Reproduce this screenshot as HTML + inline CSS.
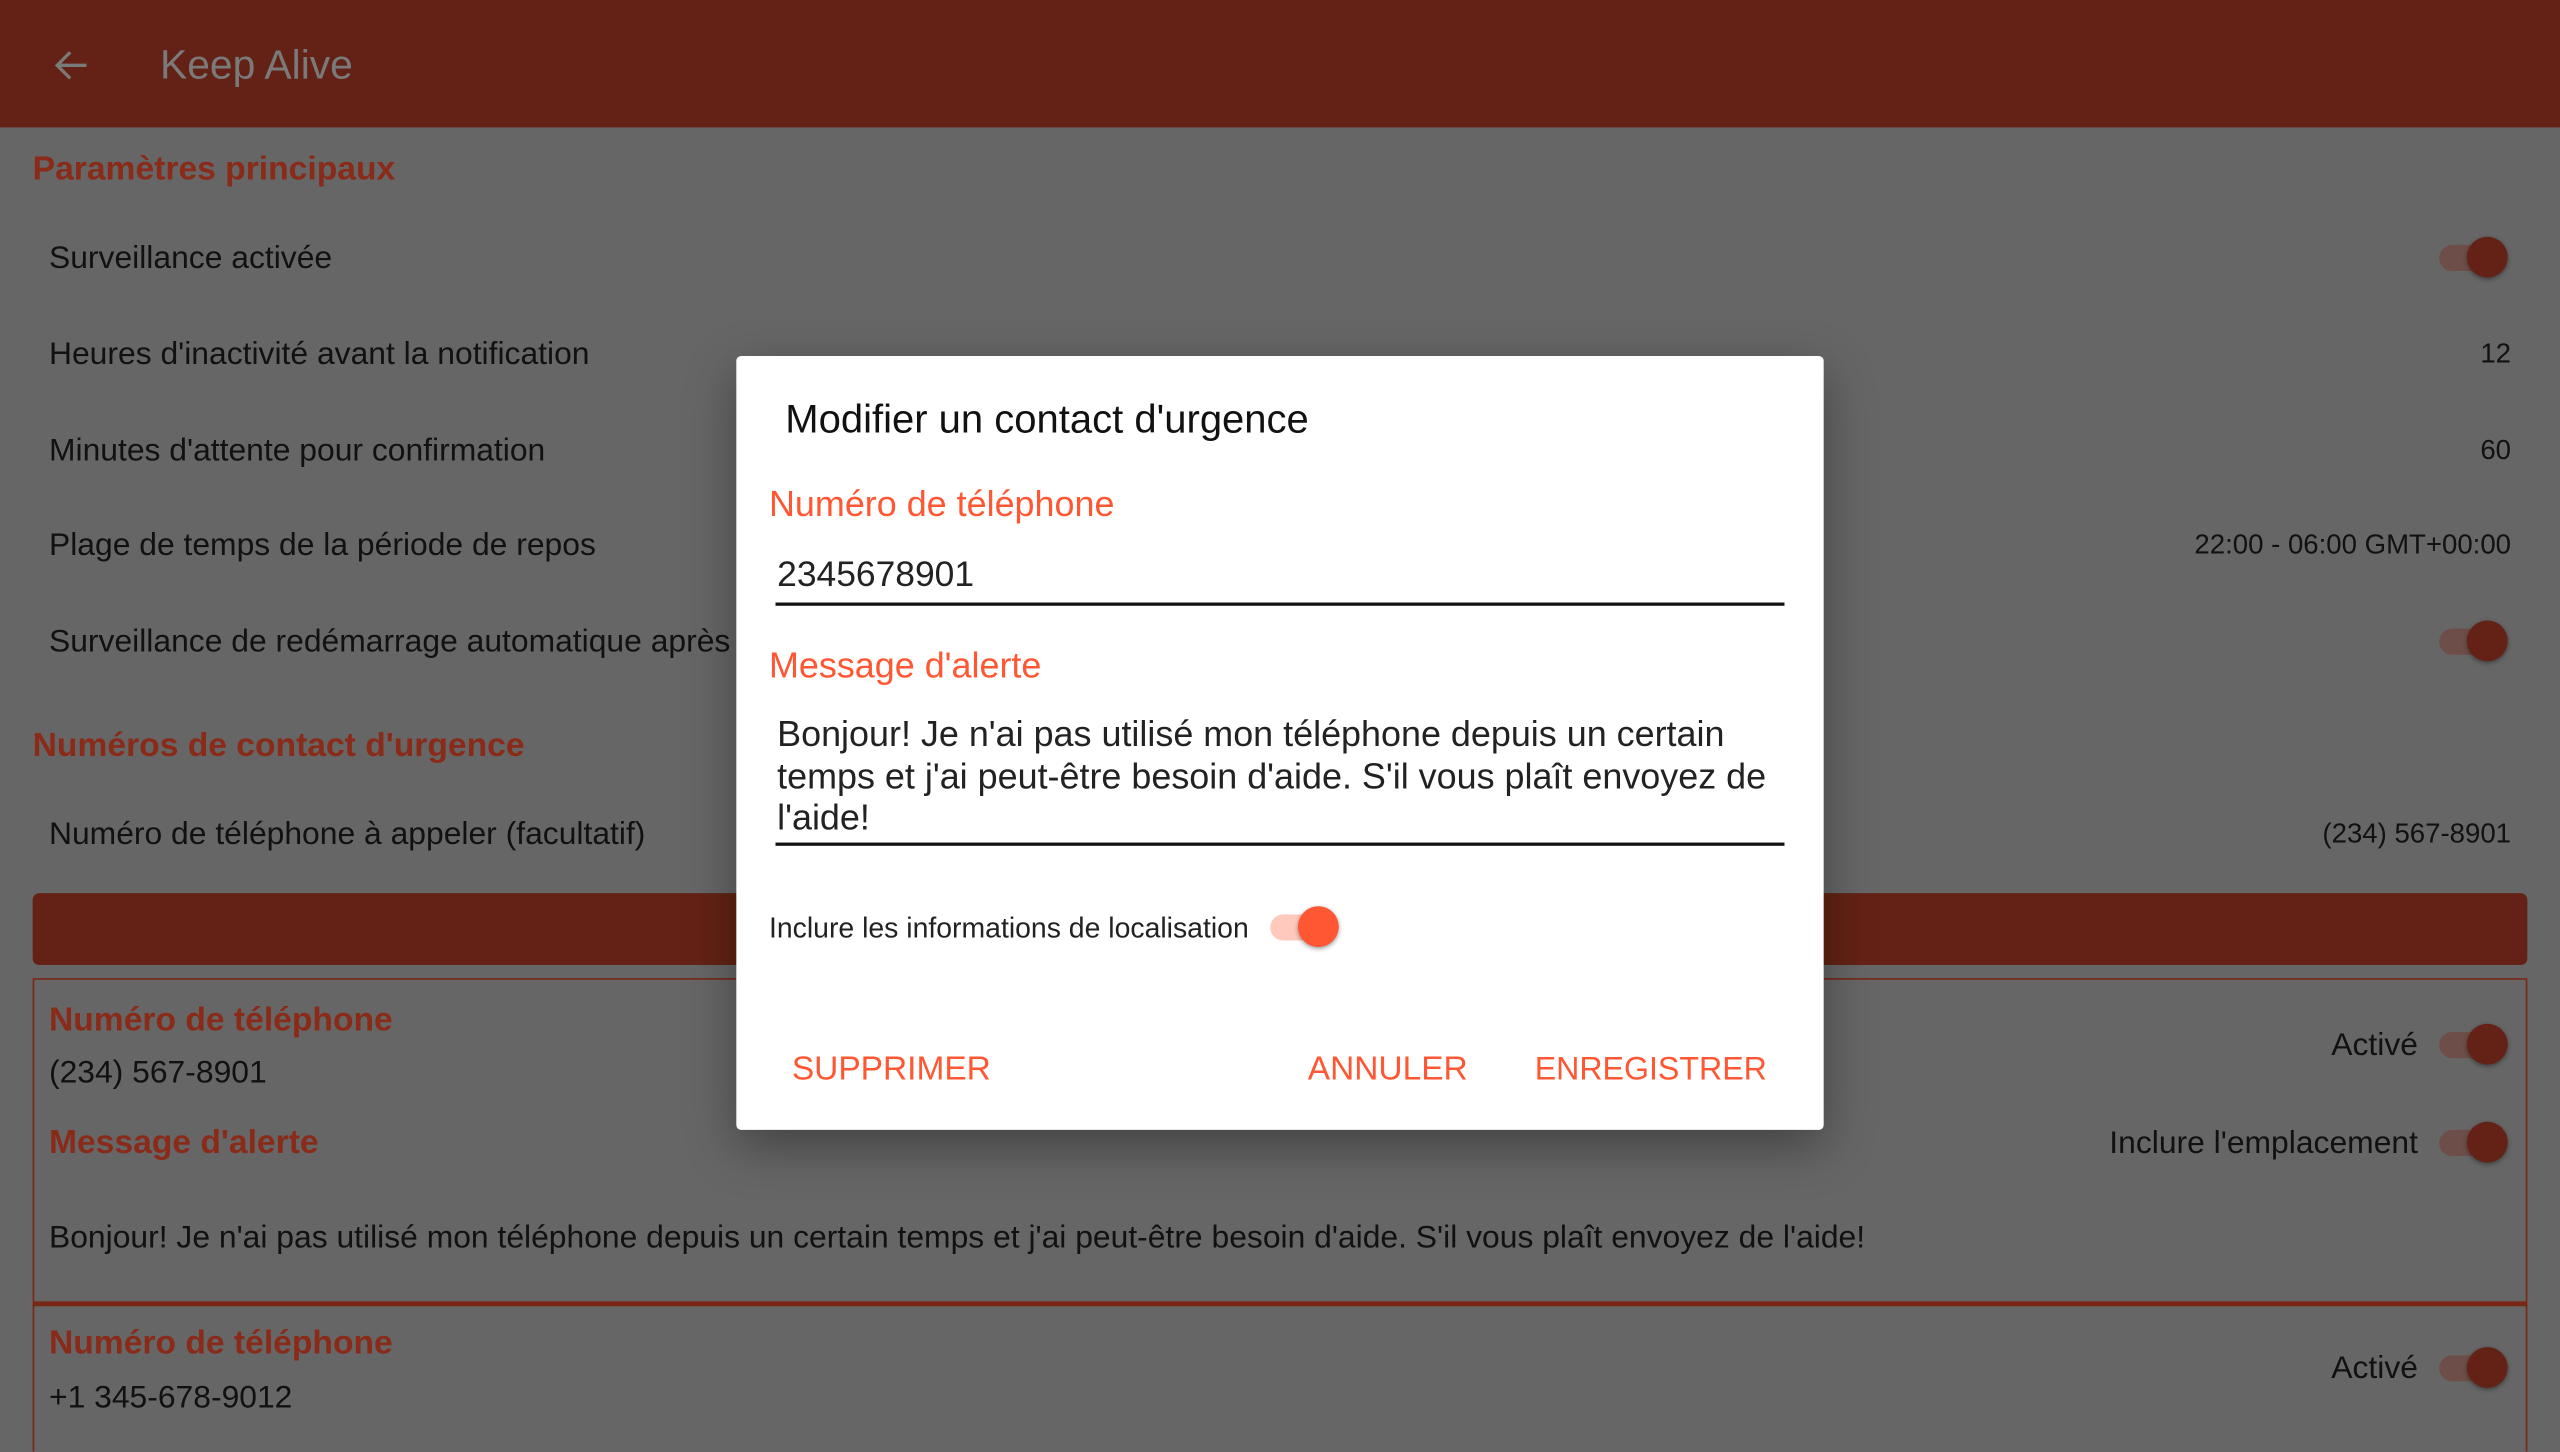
<!DOCTYPE html>
<html><head><meta charset="utf-8"><style>
html,body{margin:0;padding:0;width:2560px;height:1432px;overflow:hidden;background:#666;}
#s{position:absolute;left:0;top:0;width:1568px;height:877px;transform:scale(1.63265,1.63284);transform-origin:0 0;background:#666;font-family:"Liberation Sans",sans-serif;color:#111;}
.t{position:absolute;white-space:nowrap;line-height:30px;}
.r{text-align:right;}
.h{color:#8a2a18;font-weight:bold;font-size:20.6px;}
.b{font-size:19.5px;}
.v{font-size:16.9px;}
.tg{position:absolute;width:42px;height:26px;}
.tg i{position:absolute;left:0;top:5px;width:34px;height:16px;border-radius:8px;background:#6e4e49;}
.tg b{position:absolute;right:0;top:0;width:25px;height:25px;border-radius:50%;background:#632215;box-shadow:0 1px 3px rgba(0,0,0,.4);}
.o{color:#ff5733;}
</style></head><body><div id="s">
<div style="position:absolute;left:0;top:0;width:1568px;height:78px;background:#632215;"></div>
<svg style="position:absolute;left:32px;top:28px" width="24" height="24" viewBox="0 0 24 24"><path d="M21 12H4M11 4l-8 8 8 8" stroke="#7a7a7a" stroke-width="2" fill="none"/></svg>
<div class="t" style="left:98px;top:25px;font-size:25px;color:#7a7a7a;">Keep Alive</div>

<div class="t h" style="left:20px;top:89px;">Paramètres principaux</div>
<div class="t b" style="left:30px;top:143px;">Surveillance activée</div>
<div class="t b" style="left:30px;top:202px;">Heures d'inactivité avant la notification</div>
<div class="t b" style="left:30px;top:261px;">Minutes d'attente pour confirmation</div>
<div class="t b" style="left:30px;top:319px;">Plage de temps de la période de repos</div>
<div class="t b" style="left:30px;top:378px;">Surveillance de redémarrage automatique après</div>
<div class="t r v" style="right:30px;top:202px;">12</div>
<div class="t r v" style="right:30px;top:261px;">60</div>
<div class="t r v" style="right:30px;top:319px;">22:00 - 06:00 GMT+00:00</div>
<div class="tg" style="left:1494px;top:145px;"><i></i><b></b></div>
<div class="tg" style="left:1494px;top:380px;"><i></i><b></b></div>

<div class="t h" style="left:20px;top:442px;">Numéros de contact d'urgence</div>
<div class="t b" style="left:30px;top:496px;">Numéro de téléphone à appeler (facultatif)</div>
<div class="t r v" style="right:30px;top:496px;">(234) 567-8901</div>

<div style="position:absolute;left:20px;top:547px;width:1528px;height:44px;background:#632215;border-radius:4px;"></div>
<div style="position:absolute;left:20px;top:599px;width:1526px;height:197px;border:1px solid #7a2616;border-bottom:3px solid #7a2616;"></div>
<div style="position:absolute;left:20px;top:799px;width:1526px;height:90px;border-left:1px solid #7a2616;border-right:1px solid #7a2616;"></div>
<div class="t h" style="left:30px;top:610px;">Numéro de téléphone</div>
<div class="t b" style="left:30px;top:642px;">(234) 567-8901</div>
<div class="t h" style="left:30px;top:685px;">Message d'alerte</div>
<div class="t b" style="left:30px;top:743px;">Bonjour! Je n'ai pas utilisé mon téléphone depuis un certain temps et j'ai peut-être besoin d'aide. S'il vous plaît envoyez de l'aide!</div>
<div class="t b r" style="right:87px;top:625px;">Activé</div>
<div class="t b r" style="right:87px;top:685px;">Inclure l'emplacement</div>
<div class="tg" style="left:1494px;top:627px;"><i></i><b></b></div>
<div class="tg" style="left:1494px;top:687px;"><i></i><b></b></div>
<div class="t h" style="left:30px;top:808px;">Numéro de téléphone</div>
<div class="t b" style="left:30px;top:841px;">+1 345-678-9012</div>
<div class="t b r" style="right:87px;top:823px;">Activé</div>
<div class="tg" style="left:1494px;top:825px;"><i></i><b></b></div>

<div style="position:absolute;left:451px;top:218px;width:666px;height:474px;background:#fff;border-radius:3px;box-shadow:0 10px 30px rgba(0,0,0,.35);"></div>
<div class="t" style="left:481px;top:243px;font-size:24.5px;color:#111;">Modifier un contact d'urgence</div>
<div class="t o" style="left:471px;top:294px;font-size:22px;">Numéro de téléphone</div>
<div class="t" style="left:476px;top:337px;font-size:21.7px;color:#222;">2345678901</div>
<div style="position:absolute;left:475px;top:369px;width:618px;height:2px;background:#111;"></div>
<div class="t o" style="left:471px;top:393px;font-size:22px;">Message d'alerte</div>
<div style="position:absolute;left:476px;top:437px;width:612px;font-size:22px;line-height:25.6px;color:#222;">Bonjour! Je n'ai pas utilisé mon téléphone depuis un certain temps et j'ai peut-être besoin d'aide. S'il vous plaît envoyez de l'aide!</div>
<div style="position:absolute;left:475px;top:516px;width:618px;height:2px;background:#111;"></div>
<div class="t" style="left:471px;top:553px;font-size:17.4px;color:#222;">Inclure les informations de localisation</div>
<div class="tg" style="left:778px;top:555px;width:42px;"><i style="background:#ffcabd;"></i><b style="background:#ff5733;"></b></div>
<div class="t o" style="left:485px;top:640px;font-size:20.5px;">SUPPRIMER</div>
<div class="t o" style="left:801px;top:640px;font-size:20.5px;">ANNULER</div>
<div class="t o" style="left:940px;top:640px;font-size:19.7px;">ENREGISTRER</div>
</div></body></html>
